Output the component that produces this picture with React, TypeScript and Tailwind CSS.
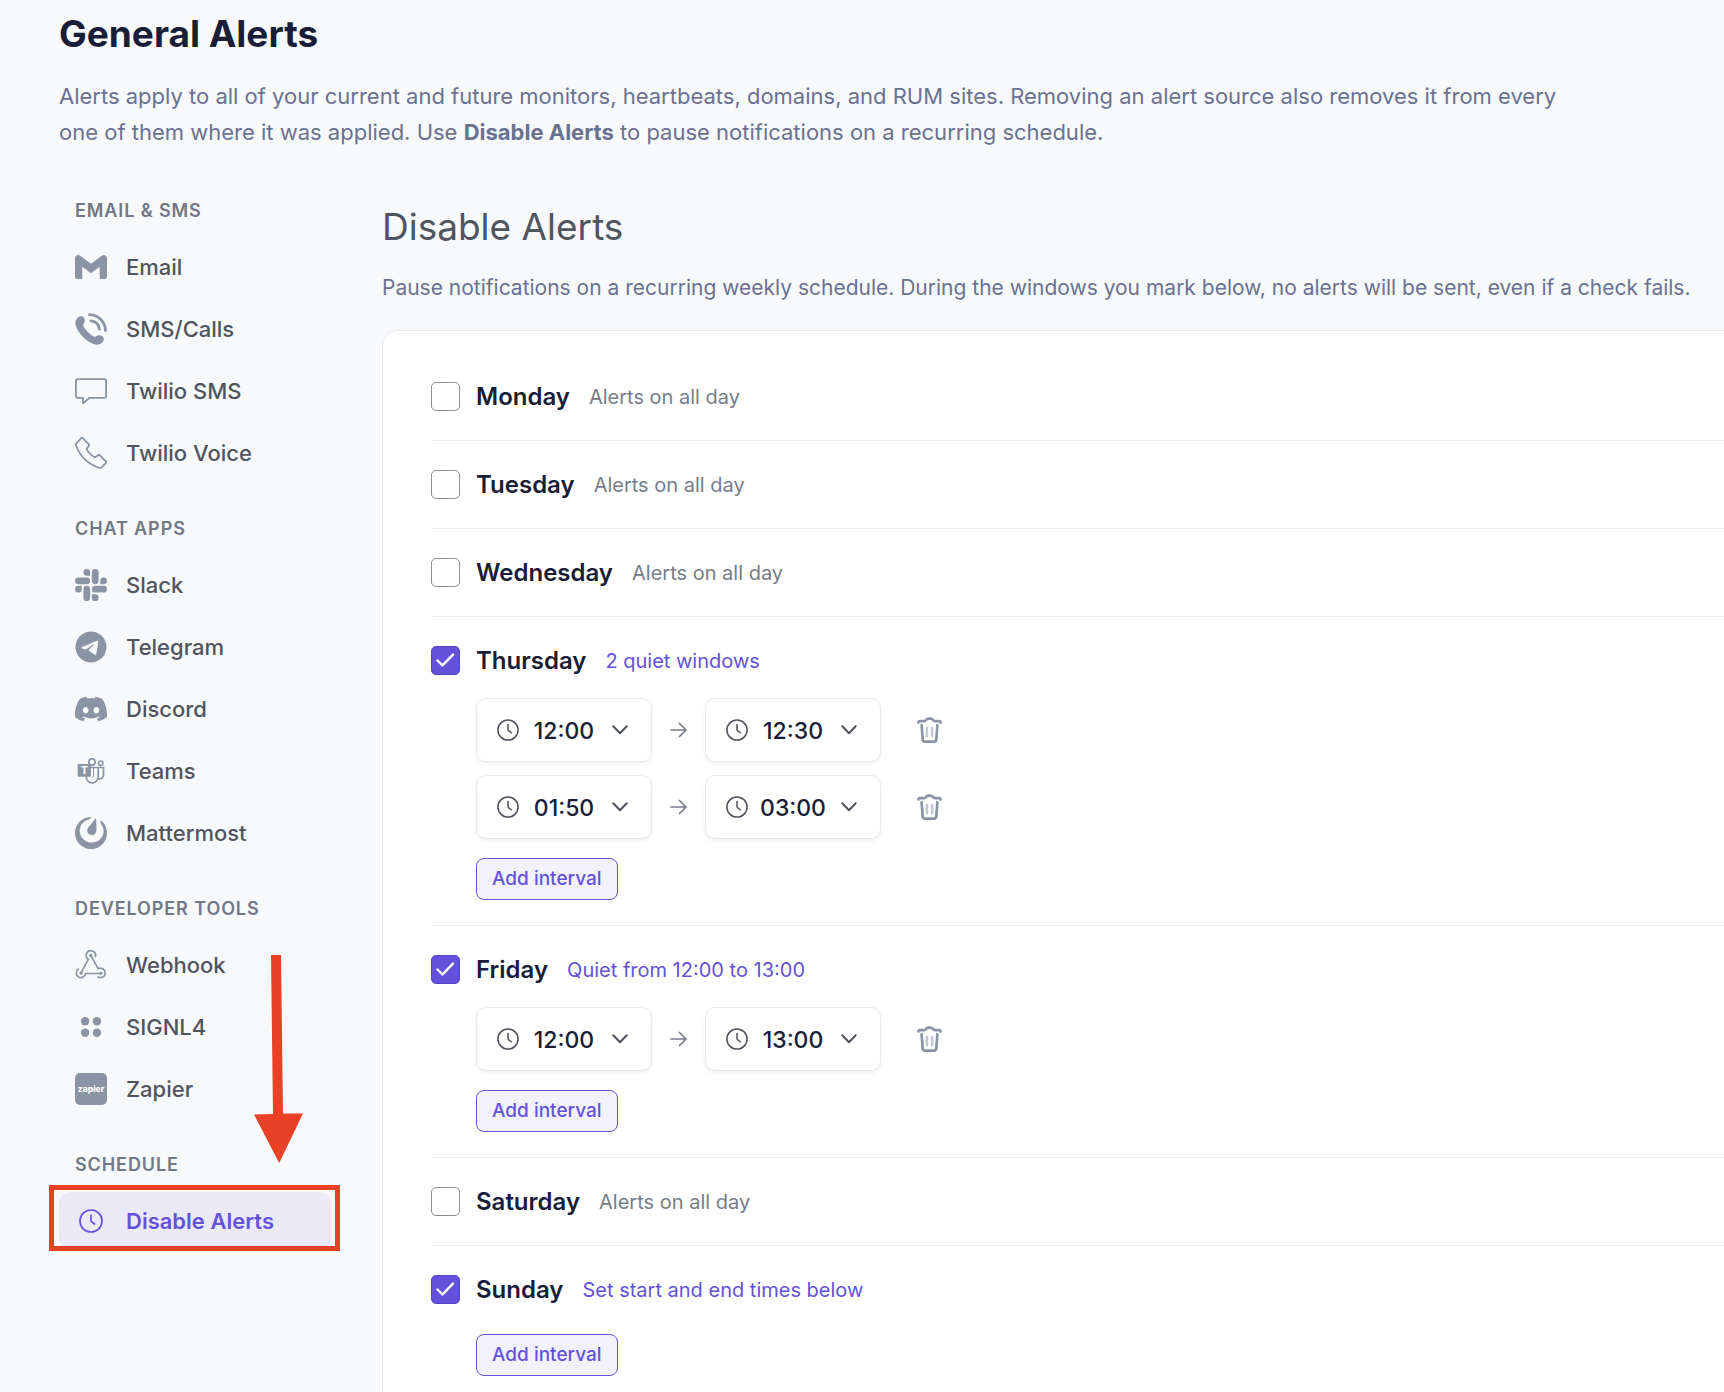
import { useState, type ReactNode } from 'react';
import { FaTelegram } from 'react-icons/fa6';
import { SiDiscord, SiGmail, SiMattermost, SiSlack } from 'react-icons/si';

type Interval = { id: number; from: string; to: string };

type Day = {
    name: string;
    enabled: boolean;
    intervals: Interval[];
};

type NavItem = { label: string; icon: ReactNode; active?: boolean };

const initialDays: Day[] = [
    { name: 'Monday', enabled: false, intervals: [] },
    { name: 'Tuesday', enabled: false, intervals: [] },
    { name: 'Wednesday', enabled: false, intervals: [] },
    {
        name: 'Thursday',
        enabled: true,
        intervals: [
            { id: 1, from: '12:00', to: '12:30' },
            { id: 2, from: '01:50', to: '03:00' },
        ],
    },
    {
        name: 'Friday',
        enabled: true,
        intervals: [{ id: 3, from: '12:00', to: '13:00' }],
    },
    { name: 'Saturday', enabled: false, intervals: [] },
    { name: 'Sunday', enabled: true, intervals: [] },
];

// Every ten minutes of the day
const times = Array.from({ length: 144 }, (_, index) => {
    const hours = String(Math.floor(index / 6)).padStart(2, '0');
    const minutes = String((index % 6) * 10).padStart(2, '0');

    return `${hours}:${minutes}`;
});

const groups: { title: string; items: NavItem[] }[] = [
    {
        title: 'Email & SMS',
        items: [
            { label: 'Email', icon: <SiGmail className="size-8" /> },
            { label: 'SMS/Calls', icon: <CallIcon /> },
            { label: 'Twilio SMS', icon: <BubbleIcon /> },
            { label: 'Twilio Voice', icon: <HandsetIcon /> },
        ],
    },
    {
        title: 'Chat apps',
        items: [
            { label: 'Slack', icon: <SiSlack className="size-8" /> },
            { label: 'Telegram', icon: <FaTelegram className="size-8" /> },
            { label: 'Discord', icon: <SiDiscord className="size-8" /> },
            { label: 'Teams', icon: <TeamsIcon /> },
            { label: 'Mattermost', icon: <SiMattermost className="size-8" /> },
        ],
    },
    {
        title: 'Developer tools',
        items: [
            { label: 'Webhook', icon: <WebhookIcon /> },
            { label: 'SIGNL4', icon: <DotsIcon /> },
            { label: 'Zapier', icon: <ZapierIcon /> },
        ],
    },
    {
        title: 'Schedule',
        items: [
            {
                label: 'Disable Alerts',
                icon: <ClockIcon className="mx-1 size-6" />,
                active: true,
            },
        ],
    },
];

export default function App() {
    const [days, setDays] = useState(initialDays);

    function updateDay(name: string, change: Partial<Day>) {
        setDays((current) =>
            current.map((day) =>
                day.name === name ? { ...day, ...change } : day,
            ),
        );
    }

    return (
        <div className="h-screen overflow-hidden bg-[#f7f9fb] pt-[10px] pl-[59px] font-['Inter',sans-serif]">
            <header className="pr-36">
                <h1 className="text-[37px] leading-[48px] font-bold text-[#1a1d37]">
                    General Alerts
                </h1>
                <p className="mt-5 text-[22px] leading-9 text-[#6b7190]">
                    Alerts apply to all of your current and future monitors,
                    heartbeats, domains, and RUM sites. Removing an alert source
                    also removes it from every one of them where it was applied.
                    Use <strong className="font-bold">Disable Alerts</strong> to
                    pause notifications on a recurring schedule.
                </p>
            </header>

            <div className="mt-[49px] flex items-start gap-[51px]">
                <nav className="flex w-[272px] shrink-0 flex-col gap-[35px]">
                    {groups.map((group) => (
                        <section key={group.title}>
                            <h3 className="mb-[15px] pl-4 text-[18px] leading-6 font-semibold tracking-wider text-[#717784] uppercase">
                                {group.title}
                            </h3>
                            <ul className="flex flex-col gap-1">
                                {group.items.map((item) => (
                                    <NavLink item={item} key={item.label} />
                                ))}
                            </ul>
                        </section>
                    ))}
                </nav>

                <main className="min-w-0 flex-1 pt-1">
                    <h2 className="text-[37px] leading-[48px] text-[#50545f]">
                        Disable Alerts
                    </h2>
                    <p className="mt-[23px] text-[21px] leading-7 text-[#6b7190]">
                        Pause notifications on a recurring weekly schedule.
                        During the windows you mark below, no alerts will be
                        sent, even if a check fails.
                    </p>
                    <div className="mt-7 rounded-tl-2xl border-t border-l border-[#e8eaee] bg-white py-[22px] pl-12">
                        {days.map((day) => (
                            <DayRow
                                day={day}
                                key={day.name}
                                onChange={(change) =>
                                    updateDay(day.name, change)
                                }
                            />
                        ))}
                    </div>
                </main>
            </div>
        </div>
    );
}

function NavLink({ item }: { item: NavItem }) {
    return (
        <li className="relative">
            <a
                className={
                    item.active
                        ? 'flex h-[58px] items-center gap-[19px] rounded-xl bg-[#ece9f7] px-4 text-[22px] font-semibold text-[#6352d9]'
                        : 'flex h-[58px] items-center gap-[19px] rounded-xl px-4 text-[22px] font-medium text-[#50545f]'
                }
                href="#"
            >
                <span
                    className={item.active ? 'shrink-0' : 'shrink-0 text-[#8a94a4]'}
                >
                    {item.icon}
                </span>
                {item.label}
            </a>
            {item.active ? <Callout /> : null}
        </li>
    );
}

function Callout() {
    return (
        <>
            <div className="pointer-events-none absolute -top-[7px] -right-[9px] -bottom-px -left-2.5 border-[5px] border-[#ea4025]" />
            <svg
                className="pointer-events-none absolute bottom-[87px] left-[195px] h-[208px] w-[49px]"
                fill="#ea4025"
                viewBox="0 0 49 208"
            >
                <path d="M17 0h10l2 158.500h20L25.200 208 0 159.500l19-.5z" />
            </svg>
        </>
    );
}

function DayRow({
    day,
    onChange,
}: {
    day: Day;
    onChange: (change: Partial<Day>) => void;
}) {
    const inputId = `day-${day.name}`;

    function updateInterval(id: number, change: Partial<Interval>) {
        onChange({
            intervals: day.intervals.map((interval) =>
                interval.id === id ? { ...interval, ...change } : interval,
            ),
        });
    }

    function addInterval() {
        onChange({
            intervals: [
                ...day.intervals,
                { id: Date.now(), from: '12:00', to: '13:00' },
            ],
        });
    }

    return (
        <section className="border-b border-[#edeef2] pt-[29px] last:border-b-0">
            <div className="flex h-[29px] items-center">
                <span className="relative flex size-[29px]">
                    <input
                        checked={day.enabled}
                        className="size-[29px] appearance-none rounded-[5px] border border-[#8b8e96] bg-white checked:border-[#5546c4] checked:bg-[#6352d9]"
                        id={inputId}
                        onChange={(event) =>
                            onChange({ enabled: event.target.checked })
                        }
                        type="checkbox"
                    />
                    {day.enabled ? <CheckIcon /> : null}
                </span>
                <label
                    className="ml-4 text-[24px] leading-7 font-semibold text-[#1a1d37]"
                    htmlFor={inputId}
                >
                    {day.name}
                </label>
                <span
                    className={
                        day.enabled
                            ? 'ml-[19px] text-[20px] leading-7 text-[#6352d9]'
                            : 'ml-[19px] text-[20px] leading-7 text-[#777c89]'
                    }
                >
                    {statusText(day)}
                </span>
            </div>

            {day.enabled ? (
                <div className="pb-[25px] pl-[45px]">
                    {day.intervals.length > 0 ? (
                        <div className="mt-[23px] flex flex-col gap-[13px]">
                            {day.intervals.map((interval) => (
                                <div
                                    className="flex items-center"
                                    key={interval.id}
                                >
                                    <TimeSelect
                                        label={`${day.name} start time`}
                                        onChange={(from) =>
                                            updateInterval(interval.id, {
                                                from,
                                            })
                                        }
                                        value={interval.from}
                                    />
                                    <ArrowIcon />
                                    <TimeSelect
                                        label={`${day.name} end time`}
                                        onChange={(to) =>
                                            updateInterval(interval.id, { to })
                                        }
                                        value={interval.to}
                                    />
                                    <button
                                        aria-label="Remove interval"
                                        className="ml-9 text-[#8a94a4]"
                                        onClick={() =>
                                            onChange({
                                                intervals: day.intervals.filter(
                                                    (other) =>
                                                        other.id !==
                                                        interval.id,
                                                ),
                                            })
                                        }
                                        type="button"
                                    >
                                        <TrashIcon />
                                    </button>
                                </div>
                            ))}
                        </div>
                    ) : null}
                    <button
                        className={
                            day.intervals.length > 0
                                ? 'mt-[19px] block h-[42px] rounded-lg border border-[#6352d9] bg-[#f3f1fc] px-[15px] text-[19px] font-medium text-[#6352d9]'
                                : 'mt-[30px] block h-[42px] rounded-lg border border-[#6352d9] bg-[#f3f1fc] px-[15px] text-[19px] font-medium text-[#6352d9]'
                        }
                        onClick={addInterval}
                        type="button"
                    >
                        Add interval
                    </button>
                </div>
            ) : (
                <div className="h-[29px]" />
            )}
        </section>
    );
}

function TimeSelect({
    label,
    onChange,
    value,
}: {
    label: string;
    onChange: (value: string) => void;
    value: string;
}) {
    return (
        <div className="relative h-16 w-44 rounded-[10px] border border-[#e8eaee] bg-white shadow-[0_2px_4px_rgba(20,25,50,0.06)]">
            <ClockIcon className="pointer-events-none absolute top-5 left-5 size-[22px] text-[#50545f]" />
            <select
                aria-label={label}
                className="size-full appearance-none rounded-[10px] bg-transparent pt-0.5 text-center text-[23px] font-medium text-[#1a1d37]"
                onChange={(event) => onChange(event.target.value)}
                value={value}
            >
                {times.map((time) => (
                    <option key={time}>{time}</option>
                ))}
            </select>
            <svg
                className="pointer-events-none absolute top-[26px] right-[23px] h-[10px] w-4"
                fill="none"
                stroke="#50545f"
                strokeLinecap="round"
                strokeLinejoin="round"
                strokeWidth="2"
                viewBox="0 0 16 10"
            >
                <path d="m1.300 1.300 6.700 7 6.700-7" />
            </svg>
        </div>
    );
}

function statusText(day: Day) {
    if (!day.enabled) {
        return 'Alerts on all day';
    }

    if (day.intervals.length === 0) {
        return 'Set start and end times below';
    }

    if (day.intervals.length === 1) {
        return `Quiet from ${day.intervals[0].from} to ${day.intervals[0].to}`;
    }

    return `${day.intervals.length} quiet windows`;
}

function ClockIcon({ className }: { className: string }) {
    return (
        <svg
            className={className}
            fill="none"
            stroke="currentColor"
            strokeLinecap="round"
            strokeLinejoin="round"
            strokeWidth="1.7"
            viewBox="0 0 24 24"
        >
            <circle cx="12" cy="12" r="11" />
            <path d="M12 6v5.200c0 .7.300 1.200.800 1.700l2.800 2.100" />
        </svg>
    );
}

function CheckIcon() {
    return (
        <svg
            className="pointer-events-none absolute top-[7px] left-[5px] h-[14px] w-[19px]"
            fill="none"
            stroke="#fff"
            strokeLinecap="round"
            strokeLinejoin="round"
            strokeWidth="2.4"
            viewBox="0 0 19 14"
        >
            <path d="m1.500 7.500 5 4.800L17 1.600" />
        </svg>
    );
}

function ArrowIcon() {
    return (
        <svg
            className="mx-[18px] h-4 w-[17px]"
            fill="none"
            stroke="#777c89"
            strokeLinecap="round"
            strokeLinejoin="round"
            strokeWidth="1.7"
            viewBox="0 0 17 16"
        >
            <path d="M1 8h15M9.500 1.500 16 8l-6.500 6.500" />
        </svg>
    );
}

function TrashIcon() {
    return (
        <svg
            className="h-[26px] w-[25px]"
            fill="none"
            stroke="currentColor"
            strokeLinecap="round"
            strokeLinejoin="round"
            strokeWidth="2.8"
            viewBox="0 0 26 27"
        >
            <path d="M1.500 5.800c0-1 .7-1.600 1.700-1.600h4.100c.7 0 1.300-.2 1.800-.7l1.200-1.200c.5-.5 1-.7 1.700-.7h2c.7 0 1.200.2 1.700.7l1.200 1.200c.5.5 1.100.7 1.800.7h4.100c1 0 1.700.6 1.700 1.600" />
            <path d="m4.800 8.500 1.100 14.800c.1 1.400 1 2.200 2.400 2.200h9.400c1.400 0 2.300-.8 2.400-2.200l1.100-14.800" />
            <path d="M10.300 11.500v8.500M15.700 11.500v8.500" opacity=".5" strokeWidth="2.600" />
        </svg>
    );
}

function CallIcon() {
    return (
        <svg className="size-8" fill="currentColor" viewBox="0 0 32 32">
            <path d="M3 4.500c1.500-1.700 4.500-1.700 5.800.1 1.400 2 1.200 4.400-.2 6.200-.6 1-.6 1.700.1 2.900 2.300 3.800 5.800 7.300 9.600 9.600 1.200.7 1.900.7 2.900 0 1.800-1.300 4.400-1.300 6.200.1 1.900 1.400 1.900 4.200.2 5.900-2.100 2.300-5.100 3-8.100 2C10.500 28 4 21.500.7 12.500-.3 9.500.6 6.800 3 4.500Z" />
            <path
                d="M14.500 1.700C23.500 2 30.200 9 30.500 17.500M16 7.800c5 .6 8 4 8.400 8.200"
                fill="none"
                stroke="currentColor"
                strokeLinecap="round"
                strokeWidth="2.800"
            />
        </svg>
    );
}

function BubbleIcon() {
    return (
        <svg
            className="size-8"
            fill="none"
            stroke="currentColor"
            strokeLinejoin="round"
            strokeWidth="1.800"
            viewBox="0 0 32 32"
        >
            <path d="M2.500 4.200h27c.9 0 1.600.7 1.600 1.600v15.400c0 .9-.7 1.600-1.600 1.600H14.700L8 28.200v-5.400H2.500c-.9 0-1.600-.7-1.600-1.600V5.800c0-.9.7-1.600 1.600-1.600Z" />
        </svg>
    );
}

function HandsetIcon() {
    return (
        <svg
            className="size-8"
            fill="none"
            stroke="currentColor"
            strokeLinejoin="round"
            strokeWidth="1.800"
            viewBox="0 0 32 32"
        >
            <path d="M7.900 1.200l5.700 5.900c.6.700.6 1.300.1 2l-2.100 2.900c1.600 3.500 4.700 6.700 8.200 8.400l3.200-2.200c.7-.5 1.300-.4 1.900.1l5.900 6.100c.5.600.5 1.100 0 1.700l-4.500 4.500c-.5.500-1 .6-1.700.4C13 27 4.500 18.500.900 8c-.2-.7-.1-1.200.4-1.700L6 1.300c.6-.6 1.300-.7 1.900-.1Z" />
        </svg>
    );
}

function TeamsIcon() {
    return (
        <svg
            className="size-8"
            fill="none"
            stroke="currentColor"
            strokeWidth="1.700"
            viewBox="0 0 32 32"
        >
            <circle cx="17" cy="7" r="3.100" />
            <circle cx="25.700" cy="8.200" r="2.200" />
            <path d="M15.500 12.500h7.700v9.300a6 6 0 0 1-12 0v-.8M23.200 12.500h5.300v7.300a4 4 0 0 1-5.300 3.800" />
            <path d="M18.500 13v7.500c0 1-.6 1.500-1.500 1.500" strokeWidth="1" />
            <rect
                fill="currentColor"
                height="12.700"
                rx="1"
                stroke="none"
                width="13.200"
                x="2.700"
                y="9"
            />
            <text
                className="font-['Inter',sans-serif] font-bold"
                fill="#fff"
                fontSize="11"
                stroke="none"
                textAnchor="middle"
                x="9.300"
                y="19.400"
            >
                T
            </text>
        </svg>
    );
}

function WebhookIcon() {
    return (
        <svg
            className="size-8"
            fill="none"
            stroke="currentColor"
            strokeLinecap="round"
            strokeLinejoin="round"
            strokeWidth="1.700"
            viewBox="0 0 32 32"
        >
            <path d="M20.500 7.300a4.700 4.700 0 1 0-7.300 3L6 23.800" />
            <path d="M15.800 6.400 23.200 19.800a4.700 4.700 0 1 1 0 8.200" />
            <path d="M3.300 20a4.700 4.700 0 1 0 7.300 4.500H26" />
            <circle cx="15.800" cy="6.500" fill="currentColor" r=".8" />
            <circle cx="6" cy="24" fill="currentColor" r=".8" />
            <circle cx="26" cy="24.300" fill="currentColor" r=".8" />
        </svg>
    );
}

function DotsIcon() {
    return (
        <svg className="size-8" fill="currentColor" viewBox="0 0 32 32">
            <circle cx="10.100" cy="10.200" r="4.200" />
            <circle cx="21.900" cy="10.200" r="4.200" />
            <circle cx="10.100" cy="21.800" r="4.200" />
            <circle cx="21.900" cy="21.800" r="4.200" />
        </svg>
    );
}

function ZapierIcon() {
    return (
        <svg className="size-8" viewBox="0 0 32 32">
            <rect fill="currentColor" height="32" rx="5" width="32" />
            <text
                className="font-['Inter',sans-serif] font-extrabold"
                fill="#fff"
                fontSize="8.500"
                textAnchor="middle"
                x="16"
                y="18.600"
            >
                zapier
            </text>
        </svg>
    );
}
